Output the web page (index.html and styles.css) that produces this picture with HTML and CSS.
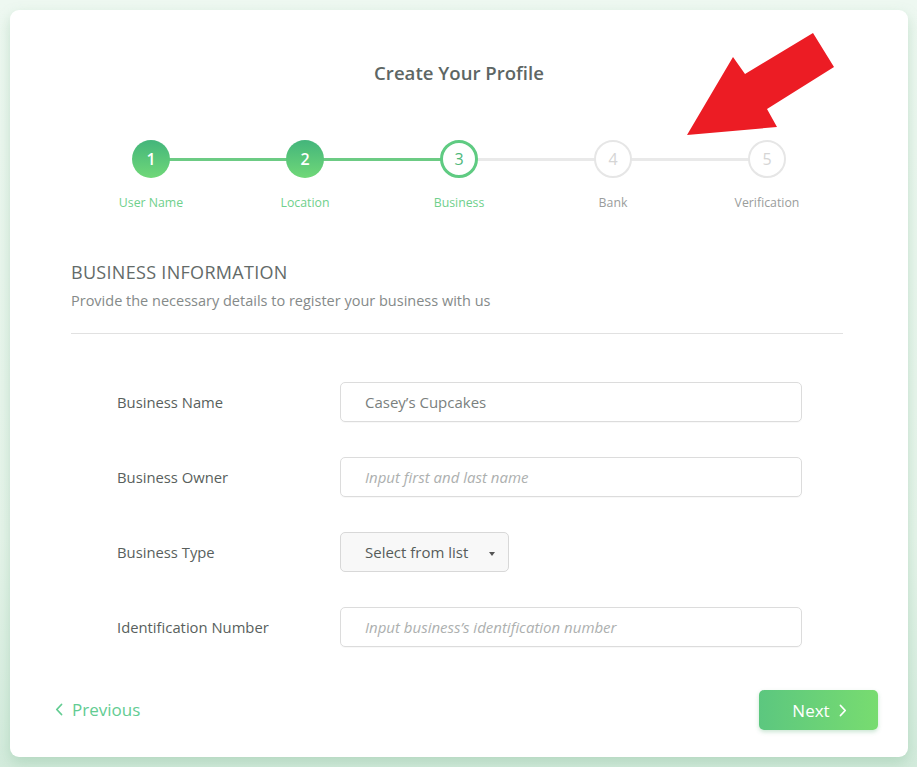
FILE: index.html
```html
<!DOCTYPE html>
<html>
<head>
<meta charset="utf-8">
<link rel="stylesheet" href="styles.css">
</head>
<body>
<div class="page">
  <div class="card">
    <h1 class="title">Create Your Profile</h1>
    <div class="stepper">
      <div class="step done">
        <div class="track"><span class="circle">1</span></div>
        <div class="label">User Name</div>
      </div>
      <div class="step done">
        <div class="track"><span class="circle">2</span></div>
        <div class="label">Location</div>
      </div>
      <div class="step current">
        <div class="track"><span class="circle">3</span></div>
        <div class="label">Business</div>
      </div>
      <div class="step todo">
        <div class="track"><span class="circle">4</span></div>
        <div class="label">Bank</div>
      </div>
      <div class="step todo last">
        <div class="track"><span class="circle">5</span></div>
        <div class="label">Verification</div>
      </div>
    </div>

    <div class="section-head">
      <h2 class="section-title">BUSINESS INFORMATION</h2>
      <p class="section-sub">Provide the necessary details to register your business with us</p>
    </div>

    <form class="form">
      <div class="row">
        <label class="field-label">Business Name</label>
        <div class="input filled">Casey’s Cupcakes</div>
      </div>
      <div class="row">
        <label class="field-label">Business Owner</label>
        <div class="input placeholder">Input first and last name</div>
      </div>
      <div class="row">
        <label class="field-label">Business Type</label>
        <div class="select">Select from list <span class="caret"></span></div>
      </div>
      <div class="row">
        <label class="field-label">Identification Number</label>
        <div class="input placeholder">Input business’s identification number</div>
      </div>
    </form>

    <div class="footer">
      <a class="prev">
        <svg class="chev" width="8" height="13" viewBox="0 0 8 13"><path d="M6.5 1.5 L1.8 6.5 L6.5 11.5" fill="none" stroke="currentColor" stroke-width="1.8" stroke-linecap="round" stroke-linejoin="round"/></svg>
        Previous
      </a>
      <button class="next" type="button">Next
        <svg class="chev" width="8" height="13" viewBox="0 0 8 13"><path d="M1.5 1.5 L6.2 6.5 L1.5 11.5" fill="none" stroke="currentColor" stroke-width="1.8" stroke-linecap="round" stroke-linejoin="round"/></svg>
      </button>
    </div>
  </div>
</div>
<svg class="annot-arrow" width="917" height="767" viewBox="0 0 917 767">
  <polygon points="687,135 733,57 745,74 813,33 834,67 767,109 777,127" fill="#ec1c24"/>
</svg>
</body>
</html>
```

FILE: styles.css
```css
* { box-sizing: border-box; }
html, body {
  margin: 0;
  padding: 0;
}
body {
  width: 917px;
  height: 767px;
  overflow: hidden;
  font-family: "Open Sans", "Lato", sans-serif;
  background: linear-gradient(180deg, #eef8f1 0%, #e6f4ea 70%, #d3ebdc 100%);
  position: relative;
}
.page {
  padding: 10px 9px 0 10px;
}
.card {
  background: #fff;
  border-radius: 9px;
  height: 747px;
  padding: 52px 65px 0 61px;
  box-shadow: 0 6px 14px rgba(120, 180, 140, 0.35);
  display: flex;
  flex-direction: column;
}
.title {
  margin: 0;
  text-align: center;
  font-size: 18.6px;
  line-height: 22px;
  font-weight: 600;
  color: #5d6664;
  padding-left: 4px;
}
.stepper {
  display: grid;
  grid-template-columns: repeat(5, 154px);
  margin: 56px 0 0 3px;
}
.step {
  display: flex;
  flex-direction: column;
  align-items: center;
}
.track {
  position: relative;
  width: 100%;
  height: 38px;
  display: flex;
  justify-content: center;
}
.track::after {
  content: "";
  position: absolute;
  left: 50%;
  right: -50%;
  top: 18px;
  height: 3px;
  background: #e9e9e9;
}
.step.done .track::after { background: #6ccb84; }
.step.last .track::after { display: none; }
.circle {
  position: relative;
  z-index: 1;
  width: 38px;
  height: 38px;
  border-radius: 50%;
  display: flex;
  align-items: center;
  justify-content: center;
  font-size: 16px;
  font-weight: 600;
  background: #fff;
}
.done .circle {
  background: linear-gradient(180deg, #43b57b 0%, #70d878 100%);
  color: #fff;
}
.current .circle {
  border: 3px solid #5fcb82;
  color: #4fb87a;
  font-weight: 400;
}
.todo .circle {
  border: 2px solid #e6e6e6;
  color: #d5d5d5;
  font-weight: 400;
}
.label {
  margin-top: 18px;
  font-size: 12.3px;
  line-height: 14px;
  color: #6fd08c;
}
.todo .label { color: #9a9d9c; }

.section-head {
  margin-top: 51px;
  padding-bottom: 22px;
  border-bottom: 1px solid #e1e1e1;
}
.section-title {
  margin: 0;
  font-size: 18px;
  line-height: 23px;
  font-weight: 400;
  color: #636a68;
  letter-spacing: 0.3px;
}
.section-sub {
  margin: 7px 0 0;
  font-size: 14.5px;
  line-height: 20px;
  color: #858a89;
}

.form {
  margin-top: 48px;
  padding: 0 41px 0 46px;
  display: flex;
  flex-direction: column;
  gap: 35px;
}
.row {
  display: flex;
  align-items: center;
}
.field-label {
  width: 223px;
  flex: none;
  font-size: 14.8px;
  font-weight: 500;
  color: #595f5d;
}
.input {
  flex: 1;
  height: 40px;
  border: 1px solid #dcdcdc;
  border-radius: 5px;
  padding-left: 24px;
  display: flex;
  align-items: center;
  font-size: 15px;
  box-shadow: 0 1px 1px rgba(0,0,0,0.03);
}
.input.filled { color: #7a7f7e; }
.input.placeholder { color: #adb0af; font-style: italic; }
.select {
  width: 169px;
  height: 40px;
  border: 1px solid #d8d8d8;
  border-radius: 5px;
  background: #f8f8f8;
  padding-left: 24px;
  display: flex;
  align-items: center;
  font-size: 15px;
  color: #565c5a;
  position: relative;
}
.caret {
  position: absolute;
  left: 148px;
  top: 19px;
  width: 0;
  height: 0;
  border-left: 3.5px solid transparent;
  border-right: 3.5px solid transparent;
  border-top: 4px solid #555;
}

.footer {
  margin-top: auto;
  margin-left: -16px;
  margin-right: -35px;
  height: 67px;
  padding-bottom: 27px;
  display: flex;
  align-items: flex-start;
  justify-content: space-between;
}
.prev {
  margin-top: 8px;
  display: flex;
  align-items: center;
  gap: 9px;
  font-size: 17px;
  color: #62cc92;
  text-decoration: none;
}
.next {
  width: 119px;
  height: 40px;
  border: none;
  border-radius: 5px;
  background: linear-gradient(90deg, #5cc77f 0%, #78dc70 100%);
  color: #fff;
  font-family: inherit;
  font-size: 17px;
  display: flex;
  align-items: center;
  justify-content: center;
  gap: 9px;
  padding-left: 8px;
  box-shadow: 0 2px 4px rgba(80, 170, 110, 0.3);
}
.annot-arrow {
  position: absolute;
  left: 0;
  top: 0;
  pointer-events: none;
}
```
